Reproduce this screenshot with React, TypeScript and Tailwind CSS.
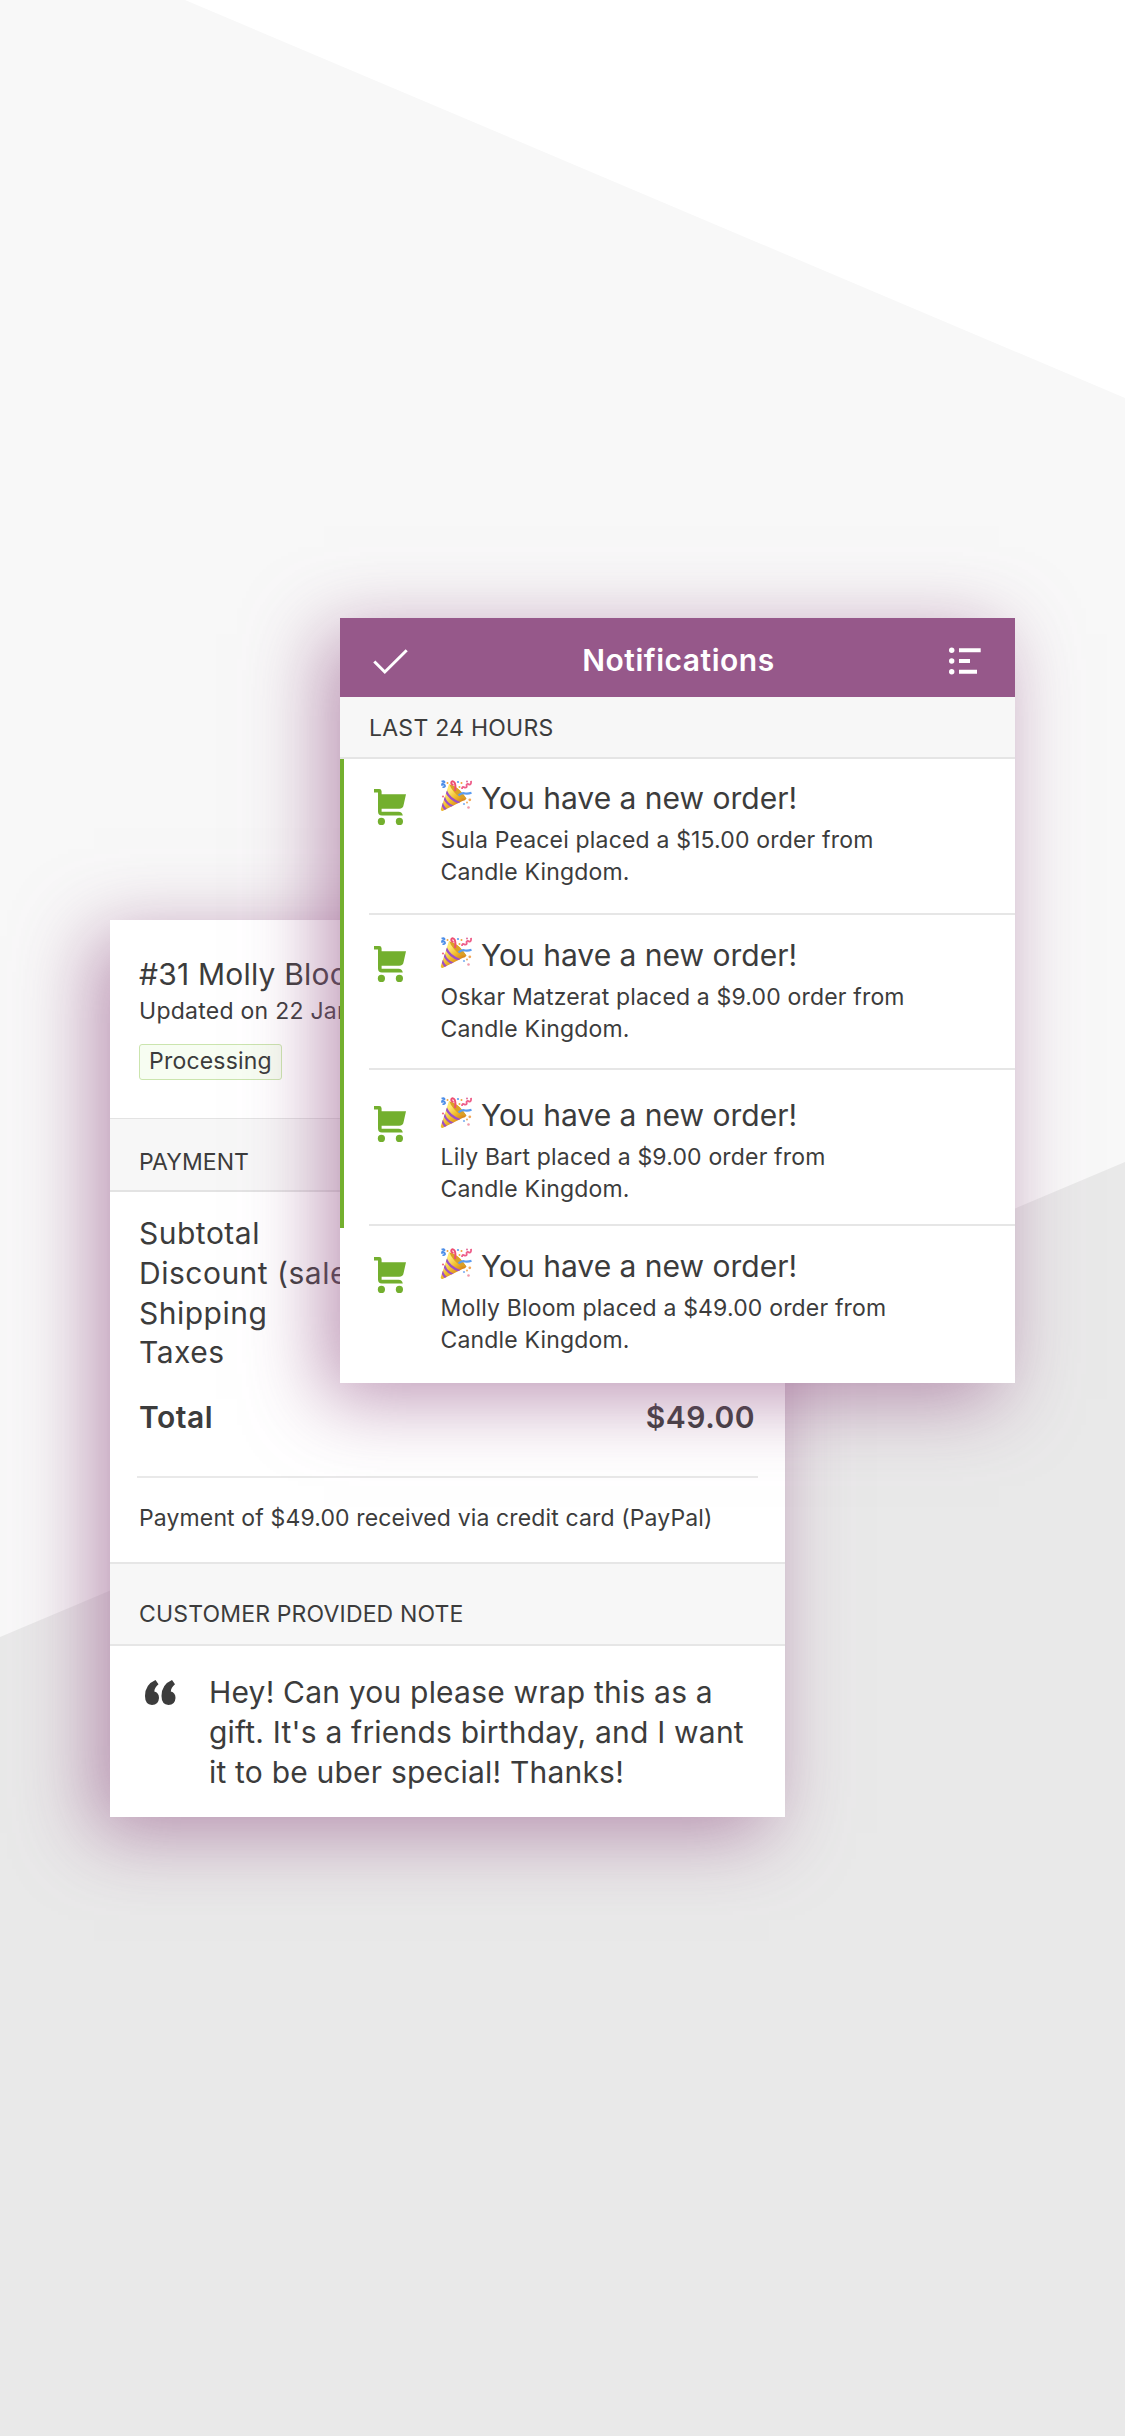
import React from "react";

const orders = [
  { text: "Sula Peacei placed a $15.00 order from", row: "h-[156px] border-b-2 pt-[19px]", unread: true },
  { text: "Oskar Matzerat placed a $9.00 order from", row: "h-[155px] border-b-2 pt-[20px]", unread: true },
  { text: "Lily Bart placed a $9.00 order from", row: "h-[156px] border-b-2 pt-[25px]", unread: true },
  { text: "Molly Bloom placed a $49.00 order from", row: "h-[157px] pt-[20px]", unread: false },
];

function Cart() {
  return (
    <svg className="mt-[10.5px] ml-[5px] h-[36px] w-[32px] shrink-0" viewBox="0 0 32 36" fill="#73af2e">
      <path d="M0 0h5.2Q7.600 0 7.600 2.400V5.300H32L29.600 16Q29 19.800 25.200 19.800H7.600V22.700H24.500Q28.300 22.700 28.800 26.600H8Q4 26.600 4 22.600V3.600H0Z" />
      <circle cx="7.400" cy="32.400" r="3.600" />
      <circle cx="25.400" cy="32.400" r="3.600" />
    </svg>
  );
}

function Popper() {
  return (
    <svg className="mt-[2px] h-[32px] w-[32px] shrink-0" viewBox="0 0 32 32" fill="none">
      <defs>
        <linearGradient id="cone" x1="6" y1="14" x2="17" y2="26" gradientUnits="userSpaceOnUse">
          <stop stopColor="#ffe873" />
          <stop offset=".5" stopColor="#f0bd2e" />
          <stop offset="1" stopColor="#d9861a" />
        </linearGradient>
        <clipPath id="coneClip">
          <path d="M9 4Q18 6 26.500 18.500Q25.500 20.500 22.500 21L2.500 31Q.5 31 .8 29Z" />
        </clipPath>
      </defs>
      <path d="M9 4Q18 6 26.500 18.500Q25.500 20.500 22.500 21L2.500 31Q.5 31 .8 29Z" fill="url(#cone)" />
      <path d="M9.500 4.500Q15 5.500 20 10.500Q24 14.500 26 19Q19 18 14 12Q10.500 8 9.500 4.500Z" fill="#d9a028" />
      <g clipPath="url(#coneClip)" stroke="#9d4fc4" strokeWidth="2.200">
        <path d="M6 11Q9 19 20 23" />
        <path d="M4 17Q6 24 14 27" />
        <path d="M2 23Q3 28 8 31" />
      </g>
      <path d="M1.500 1.500Q5 .5 4.500 2.500Q1.500 3.500 2 5Q5.500 4 5 6.500Q4 7.500 2.500 7" stroke="#4d8ee8" strokeWidth="1.700" />
      <path d="M15 11Q16 5 14.500 2.500Q13 .5 11.500 2Q10.500 4 13.500 5" stroke="#ee4f72" strokeWidth="2" />
      <path d="M31 .8Q31.500 5 29 4.500Q27.500 3 26.500 5Q27.500 8 24.500 7.500Q22 6 22 9" stroke="#ee5f8a" strokeWidth="1.800" />
      <path d="M18.500 15.500Q22 12 25 13.500Q28 14 31.500 12.800" stroke="#5b9cf0" strokeWidth="2.200" />
      <circle cx="18" cy="2" r="1.100" fill="#5b9cf0" />
      <circle cx="21.500" cy="3" r="1" fill="#f2a03c" />
      <circle cx="27" cy="1.600" r="1" fill="#e06a9a" />
      <circle cx="7.500" cy="3" r="1" fill="#f2a03c" />
      <circle cx="19.500" cy="7" r="1" fill="#f2b43c" />
      <circle cx="3" cy="16.500" r="1.100" fill="#ee6f88" />
      <circle cx="29.800" cy="19.800" r="1.400" fill="#f2a95c" />
      <circle cx="24" cy="24" r="1.100" fill="#7fb0f0" />
      <circle cx="27" cy="22.500" r="1" fill="#f2a95c" />
      <circle cx="28.500" cy="27.500" r="1.300" fill="#f09aa8" />
    </svg>
  );
}

function Backdrop() {
  return (
    <>
      <div className="absolute inset-0 bg-white [clip-path:polygon(185px_0,1125px_0,1125px_398px)]" />
      <div className="absolute inset-0 bg-[#e9e9e9] [clip-path:polygon(0_1637px,1125px_1162px,1125px_2436px,0_2436px)]" />
    </>
  );
}

function OrderCard() {
  return (
    <section className="relative col-start-1 row-start-1 mt-[920px] ml-[110px] h-[897px] w-[675px] bg-white shadow-[-16px_16px_72px_rgba(150,88,138,0.63)]">
      <div className="h-[198px] pt-[34px] pl-[29px]">
        <h2 className="text-[30px] leading-[40px] tracking-[0.2px]">#31 Molly Bloom</h2>
        <p className="mt-px text-[23px] leading-[32px] tracking-[0.26px]">Updated on 22 Jan 2018</p>
        <span className="mt-[17px] flex h-[36px] w-[143px] items-center justify-center rounded-[3px] border-[1.5px] border-[#cbe5ae] bg-[#f7fdf2] pb-[2px] text-[23px] leading-none tracking-[0.19px]">
          Processing
        </span>
      </div>
      <h3 className="h-[74px] border-t border-b-2 border-[#e3e3e3] bg-[#f7f7f7] pt-[27px] pl-[29px] text-[23px] leading-[32px] tracking-[0.05px]">PAYMENT</h3>
      <div className="pt-[22px] pl-[29px] text-[30px] leading-[39.8px] tracking-[0.5px]">
        <p>Subtotal</p>
        <p>Discount (sale)</p>
        <p>Shipping</p>
        <p>Taxes</p>
      </div>
      <div className="mt-[24px] mr-[30px] ml-[29px] flex justify-between text-[30px] leading-[40px] font-semibold tracking-[0.5px]">
        <span>Total</span>
        <span>$49.00</span>
      </div>
      <hr className="mt-[39px] mr-[27px] ml-[27px] border-t-2 border-[#e9e9e9]" />
      <p className="mt-[24px] h-[60px] pl-[29px] text-[23px] leading-[32px] tracking-[0.13px]">Payment of $49.00 received via credit card (PayPal)</p>
      <h3 className="h-[84px] border-y-2 border-[#e6e6e6] bg-[#f7f7f7] pt-[34px] pl-[29px] text-[23px] leading-[32px] tracking-[0.16px]">CUSTOMER PROVIDED NOTE</h3>
      <div className="flex pt-[26px]">
        <svg className="mt-[8px] ml-[35px] h-[25px] w-[31px] shrink-0" viewBox="0 0 31 25" fill="#3c3c3c">
          <path d="M10.500 0 13.500 4.200Q9.500 7.500 9.300 11.500Q14 12.500 14 18Q13.500 25 7 25Q0 24.500 0 16Q0 4.500 10.500 0Z" />
          <path d="M27 0 30 4.200Q26 7.500 25.800 11.500Q30.500 12.500 30.500 18Q30 25 23.500 25Q16.500 24.500 16.500 16Q16.500 4.500 27 0Z" />
        </svg>
        <p className="ml-[33px] text-[30px] leading-[40px] whitespace-nowrap tracking-[0.2px]">
          Hey! Can you please wrap this as a<br />gift. It's a friends birthday, and I want<br />it to be uber special! Thanks!
        </p>
      </div>
    </section>
  );
}

function NotificationsCard() {
  return (
    <section className="relative col-start-1 row-start-1 mt-[618px] ml-[340px] h-[765px] w-[675px] bg-white shadow-[-16px_16px_72px_rgba(150,88,138,0.63)]">
      <header className="flex h-[79px] items-center justify-between bg-[#96588a] pr-[34px] pl-[33px] text-white">
        <svg className="mt-[8px] h-[26px] w-[35px]" viewBox="0 0 35 26" fill="none" stroke="currentColor" strokeWidth="3">
          <path d="M1.300 12.500 11.800 23 33.700 1.300" />
        </svg>
        <h1 className="mt-[5px] text-[30px] leading-[40px] font-semibold tracking-[0.52px]">Notifications</h1>
        <svg className="mt-[7px] h-[28px] w-[32px]" viewBox="0 0 32 28" fill="currentColor">
          <circle cx="2.700" cy="3.200" r="2.700" />
          <circle cx="2.700" cy="14" r="2.700" />
          <circle cx="2.700" cy="24.700" r="2.700" />
          <path d="M10 1.200h21.700v4H10zM10 12h11v4H10zM10 22.700h18v4H10z" />
        </svg>
      </header>
      <h2 className="h-[62px] border-b-2 border-[#e5e5e5] bg-[#f7f7f7] pt-[15px] pl-[29px] text-[23px] leading-[32px] tracking-[0.25px]">LAST 24 HOURS</h2>
      <ul>
        {orders.map((order) => (
          <li key={order.text} className="relative pl-[29px]">
            {order.unread && <span className="absolute top-0 -bottom-[2px] left-0 z-10 w-[4px] bg-[#73af2e]" />}
            <div className={`flex border-[#e6e6e6] ${order.row}`}>
              <Cart />
              <div className="ml-[34px]">
                <div className="flex">
                  <Popper />
                  <h3 className="ml-[9px] text-[30px] leading-[40px]">You have a new order!</h3>
                </div>
                <p className="mt-[5.5px] ml-[0.5px] text-[23px] leading-[32px] tracking-[0.17px]">
                  {order.text}
                  <br />
                  Candle Kingdom.
                </p>
              </div>
            </div>
          </li>
        ))}
      </ul>
    </section>
  );
}

export default function App() {
  return (
    <main className="relative grid h-[2436px] w-[1125px] grid-cols-1 content-start justify-items-start overflow-hidden bg-[#f8f8f8] font-['Inter',sans-serif] text-[#3c3c3c]">
      <Backdrop />
      <OrderCard />
      <NotificationsCard />
    </main>
  );
}
